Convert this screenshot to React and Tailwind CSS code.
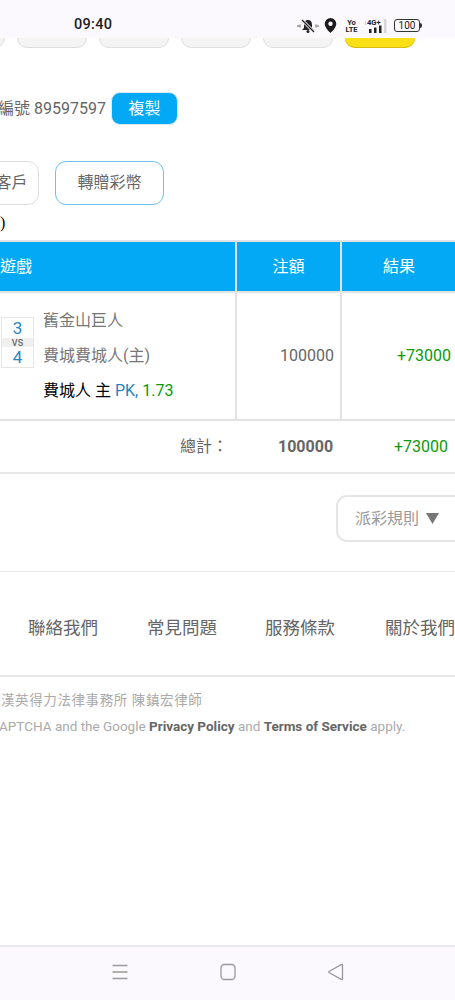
import React from 'react';

const FONT = "font-['Roboto','Noto_Sans_CJK_TC',sans-serif]";

const StatusBar = () => (
  <div className="flex h-[38px] shrink-0 items-center bg-[#fbf9fd] pt-[13px] text-black">
    <span className="ml-[74px] w-[200px] text-[14.5px] font-medium leading-none tracking-[0.3px] text-[#1c1c1c]">09:40</span>
    <svg width="22" height="16" viewBox="0 0 22 16" className="ml-[23px]">
      <path d="M11 2c-3 0-4 2.200-4 5v3l-2 2h12l-2-2V7c0-2.800-1-5-4-5z" fill="#222" />
      <circle cx="11" cy="13.500" r="1.500" fill="#222" />
      <path d="M5 2l12 12" stroke="#fbf9fd" strokeWidth="3" />
      <path d="M5 2l12 12" stroke="#222" strokeWidth="1.300" />
      <path d="M1 7v2M3 6.500v3M19 6.500v3M21 7v2" stroke="#444" strokeWidth="0.900" />
    </svg>
    <svg width="13" height="15" viewBox="0 0 13 15" className="ml-[5px]">
      <path fillRule="evenodd" d="M6.500 0A5.800 5.800 0 0 0 .7 5.800C.7 10 6.500 15 6.500 15s5.800-5 5.800-9.200A5.800 5.800 0 0 0 6.500 0zm0 3.600a2.200 2.200 0 1 1 0 4.400 2.200 2.200 0 0 1 0-4.400z" fill="#1c1c1c" />
    </svg>
    <div className="ml-[9px] flex w-[11px] flex-col items-center text-[7.500px] font-bold leading-[7px] text-[#222]">
      <span>Yo</span>
      <span>LTE</span>
    </div>
    <svg width="24" height="15" viewBox="0 0 24 15" className="ml-[7px]">
      <text x="3" y="6.500" fontSize="7.500" fontWeight="700" fill="#222" fontFamily="Roboto">4G+</text>
      <path d="M1 4h1M1 6h1" stroke="#999" />
      <rect x="5" y="11" width="2.500" height="4" fill="#222" />
      <rect x="10" y="9.500" width="2.500" height="5.500" fill="#222" />
      <rect x="15" y="7.500" width="2.500" height="7.500" fill="#222" />
      <rect x="20" y="1" width="2.500" height="14" fill="#d8d6da" />
    </svg>
    <div className="ml-[6px] flex h-[13px] w-[26px] items-center justify-center rounded-[3px] border border-[#333] text-[10px] leading-none text-[#222]">100</div>
    <div className="h-[5px] w-[1.500px] rounded-r-sm bg-[#333]" />
  </div>
);

const ChipRow = () => (
  <div className="flex h-[10px] shrink-0 items-end gap-[12px] overflow-hidden">
    <div className="-ml-[65px] h-[30px] w-[70px] shrink-0 rounded-b-[10px] border border-[#dfdfdf] bg-[#f4f4f4]" />
    {[0, 1, 2, 3].map((i) => (
      <div key={i} className="h-[30px] w-[70px] shrink-0 rounded-b-[10px] border border-[#dfdfdf] bg-[#f4f4f4]" />
    ))}
    <div className="h-[30px] w-[70px] shrink-0 rounded-b-[10px] bg-[#fbe018] shadow-[inset_0_-1px_0_#d9bd10]" />
  </div>
);

const Cell = ({ className = '', children }) => (
  <div className={`flex items-center border-l-2 border-[#e2e2e2] ${className}`}>{children}</div>
);

const App = () => (
  <div className={`flex h-[1000px] w-[455px] flex-col overflow-hidden bg-white ${FONT}`}>
    <StatusBar />
    <ChipRow />

    <div className="mt-[44px] flex h-[33px] shrink-0 items-center">
      <div className="flex w-[107px] justify-end overflow-hidden whitespace-nowrap pr-px text-[16px] text-[#666]">
        會員編號 89597597
      </div>
      <button className="ml-[4px] h-[33px] w-[67px] rounded-[9px] border border-[#dfe8ee] bg-[#03a9f4] text-[16px] text-white">複製</button>
    </div>

    <div className="mt-[36px] flex h-[44px] shrink-0 items-stretch">
      <div className="-ml-[60px] flex w-[99px] items-center justify-center rounded-[11px] border border-[#dedede] pl-[60px] text-[16px] text-[#666]">
        <span className="-ml-[60px] w-[76px] text-right">客戶</span>
      </div>
      <button className="ml-[16px] w-[109px] rounded-[11px] border border-[#6cc4ea] text-[16px] text-[#666]">轉贈彩幣</button>
    </div>

    <div className="mt-[7px] h-[21px] shrink-0 font-['Liberation_Serif',serif] text-[16px] leading-[21px] text-black">)</div>

    <div className="mt-[7px] shrink-0 border-y-2 border-[#e2e2e2]">
      <div className="grid h-[49px] grid-cols-[235px_105px_116px] bg-[#03a9f4] text-[16px] text-white">
        <div className="flex items-center">遊戲</div>
        <Cell className="justify-center">注額</Cell>
        <Cell className="justify-center">結果</Cell>
      </div>
    </div>

    <div className="grid h-[128px] shrink-0 grid-cols-[235px_105px_115px] border-b-2 border-[#e2e2e2]">
      <div className="flex items-start pl-px pt-[24px]">
        <div className="flex h-[51px] w-[33px] flex-col border border-[#e6e6e6] text-center">
          <span className="h-[20px] text-[17px] leading-[21px] text-[#2a86c5]">3</span>
          <span className="h-[9px] bg-[#f0f0f0] text-[9px] font-medium leading-[10px] text-[#666]">VS</span>
          <span className="h-[20px] text-[17px] leading-[20px] text-[#2a86c5]">4</span>
        </div>
        <div className="-mt-[14px] ml-[9px] flex flex-col text-[16px] text-[#777]">
          <span className="h-[35px] leading-[35px]">舊金山巨人</span>
          <span className="h-[35px] leading-[35px]">費城費城人(主)</span>
          <span className="h-[35px] whitespace-nowrap leading-[35px] text-black">
            費城人 主 <span className="text-[#1f83c5]">PK,</span> <span className="text-[#0a9a0a]">1.73</span>
          </span>
        </div>
      </div>
      <Cell className="justify-end pr-[6px] text-[16px] text-[#666]">100000</Cell>
      <Cell className="justify-end pr-[4px] text-[16px] text-[#0a9a0a]">+73000</Cell>
    </div>

    <div className="flex h-[53px] shrink-0 items-center border-b-2 border-[#e8e8e8] text-[16px]">
      <span className="ml-[180px] w-[98px] text-[#666]">總計：</span>
      <span className="w-[57px] font-bold text-[#666]">100000</span>
      <span className="ml-[59px] text-[#0a9a0a]">+73000</span>
    </div>

    <div className="mt-[21px] flex h-[47px] shrink-0">
      <button className="ml-[336px] flex w-[130px] shrink-0 items-center rounded-[11px] border-2 border-[#e6e6e6] pl-[17px] text-[16px] text-[#999]">
        派彩規則
        <svg width="13" height="11" viewBox="0 0 13 11" className="ml-[7px]">
          <path d="M0 0h13L6.500 11z" fill="#777" />
        </svg>
      </button>
    </div>

    <div className="mt-[29px] h-px shrink-0 bg-[#e8e8e8]" />

    <div className="flex h-[103px] shrink-0 items-center whitespace-nowrap pl-[28px] pt-[9px] text-[17.500px] text-[#666]">
      <span className="w-[123px]">聯絡我們</span>
      <span className="w-[122px]">常見問題</span>
      <span className="w-[124px]">服務條款</span>
      <span>關於我們</span>
    </div>

    <div className="h-0.5 shrink-0 bg-[#e8e8e8]" />

    <div className="mt-[13px] flex h-[20px] shrink-0 justify-start overflow-hidden whitespace-nowrap text-[13.500px] leading-[20px] tracking-[0.6px] text-[#aaa]">
      <span className="pl-px">漢英得力法律事務所 陳鎮宏律師</span>
    </div>

    <div className="mt-[6px] h-[20px] shrink-0 overflow-hidden whitespace-nowrap text-[13.500px] leading-[20px] text-[#aaa]">
      <span className="-ml-px">
        APTCHA and the Google <b className="font-bold text-[#666]">Privacy Policy</b> and <b className="font-bold text-[#666]">Terms of Service</b> apply.
      </span>
    </div>

    <div className="flex-1" />

    <div className="flex h-[55px] shrink-0 items-center border-t-2 border-[#e9e7ee] bg-[#fbf9fd] pb-[3px]">
      <svg width="18" height="18" viewBox="0 0 18 18" className="ml-[111px]">
        <path d="M1.500 2.500h15M1.500 9h15M1.500 15.500h15" stroke="#999" strokeWidth="1.300" />
      </svg>
      <svg width="18" height="18" viewBox="0 0 18 18" className="ml-[90px]">
        <rect x="2" y="1.500" width="14" height="15" rx="3.500" fill="none" stroke="#999" strokeWidth="1.300" />
      </svg>
      <svg width="18" height="18" viewBox="0 0 18 18" className="ml-[90px]">
        <path d="M15.500 1.800v14.400a.6.6 0 0 1-.9.4L2 9.500a.6.6 0 0 1 0-1l12.600-7.100a.6.6 0 0 1 .9.4z" fill="none" stroke="#999" strokeWidth="1.300" />
      </svg>
    </div>
  </div>
);

export default App;
